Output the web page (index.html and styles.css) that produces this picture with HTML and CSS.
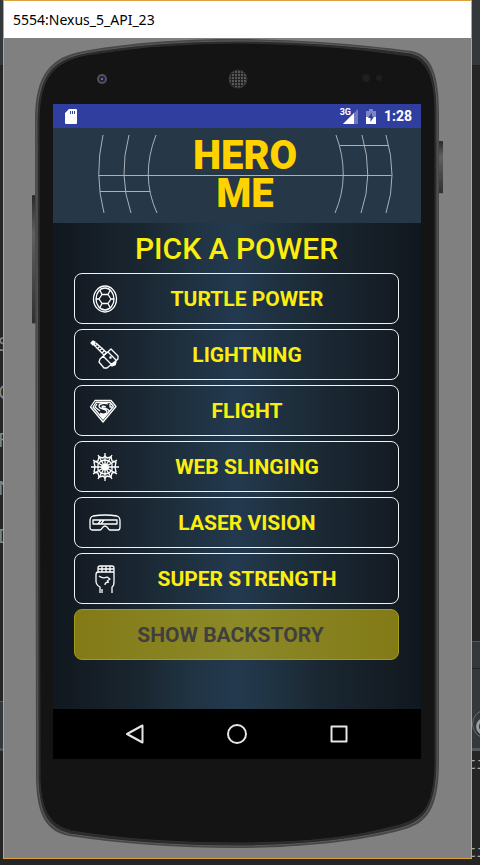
FILE: index.html
```html
<!DOCTYPE html>
<html lang="en">
<head>
<meta charset="utf-8">
<meta name="viewport" content="width=device-width, initial-scale=1">
<title>5554:Nexus_5_API_23</title>
<link rel="stylesheet" href="styles.css">
</head>
<body>
<div class="desktop">
  <aside class="edge edge-left" aria-hidden="true">
    <div class="panel panel-top"></div>
    <div class="names"><span>S</span><span>C</span><span>F</span><span>N</span><span>D</span></div>
    <div class="panel panel-low"></div>
  </aside>

  <main class="window">
    <header class="titlebar">5554:Nexus_5_API_23</header>
    <div class="stage">
      <svg class="phone" viewBox="0 0 467 819" preserveAspectRatio="none" aria-hidden="true">
        <defs>
          <linearGradient id="key" x1="0" y1="0" x2="0" y2="1"><stop offset="0" stop-color="#292929"/><stop offset=".3" stop-color="#606060"/><stop offset="1" stop-color="#303030"/></linearGradient>
          <pattern id="mesh" width="3" height="3" patternUnits="userSpaceOnUse"><rect width="3" height="3" fill="#202020"/><circle cx="1" cy="1" r="1" fill="#6b6b6b"/></pattern>
        </defs>
        <rect x="28" y="157" width="5" height="128" fill="url(#key)"/>
        <rect x="435" y="103" width="4" height="52" fill="url(#key)"/>
        <path d="M31 83C31 34 48 19 80 13C135 3 190 1 233 1C276 1 340 4 408 13C426 17 435 33 435 75V725C434 780 418 787 386 794C344 804 285 809 233 809C175 809 117 805 65 797C43 792 33 778 32 740Z" fill="#464748"/>
        <path d="M33 83C33 36 49 21 81 15C136 5 190 3 233 3C276 3 340 6 407 15C424 19 433 34 433 75V725C432 778 416 785 385 792C343 802 285 807 233 807C175 807 117 803 66 795C45 790 35 777 34 740Z" fill="#2b2b2b" stroke="#5a5b5d"/>
        <path d="M35 83C35 38 51 23 82 17C137 8 190 5 233 5C276 5 340 8 406 18C422 22 431 36 431 75V725C430 776 415 782 384 789C342 800 285 804 233 804C175 804 117 800 67 792C47 787 37 774 36 740Z" fill="#141414" stroke="#303030"/>
        <circle cx="98" cy="41" r="5" fill="#55514f"/><circle cx="98" cy="41" r="3" fill="#202044"/><circle cx="98" cy="41" r="1" fill="#8181c8"/>
        <circle cx="234" cy="41" r="9" fill="url(#mesh)" stroke="#343434"/>
        <circle cx="362" cy="40" r="4" fill="#221d1e"/><circle cx="375" cy="40" r="3" fill="#211e20"/>
      </svg>

      <section class="screen">
        <div class="status">
          <svg class="sd" width="12" height="15" viewBox="0 0 12 15" role="img" aria-label="SD card"><path fill="#fff" d="M4 0h7q1 0 1 1v13q0 1-1 1H1q-1 0-1-1V4z"/><path stroke="#303f9f" d="M5.500 2v3M7.500 2v3M9.500 2v3"/></svg>
          <div class="signals">
            <span class="net">3G</span>
            <svg class="cell" width="15" height="15" viewBox="0 0 15 15" aria-hidden="true"><path fill="#7079bc" d="M15 0v15H0z"/><path fill="#fff" d="M11 4v11H0z"/></svg>
            <svg class="battery" width="10" height="15" viewBox="0 0 10 15" role="img" aria-label="Charging"><path fill="#7d86c4" d="M3 0h4v2h3v13H0V2h3z"/><path fill="#fff" d="M0 8h10v7H0z"/><path fill="#303f9f" d="M6 3.500L2 9h2.500v4L8 7.500H6z"/></svg>
            <time>1:28</time>
          </div>
        </div>

        <div class="banner">
          <svg class="globe" viewBox="0 0 368 95" preserveAspectRatio="none" aria-hidden="true">
            <path d="M50 7Q41 47 51 85M76 7Q65 48 78 85M103 7Q87 48 104 85M283 7Q298 48 282 85M309 7Q321 48 308 85M333 7Q345 48 333 85M45.500 47.500H338.500M47 63.500H97M287 17.500H335"/>
          </svg>
          <h1>HERO<br>ME</h1>
        </div>

        <div class="content">
          <h2>PICK A POWER</h2>
          <div class="powers">
            <button type="button"><svg viewBox="0 0 32 32"><ellipse cx="16" cy="16" rx="11.500" ry="13"/><ellipse cx="16" cy="16" rx="9" ry="11"/><path d="M13 11.500h6l3 4.500-3 4.500h-6L10 16zM13 11.500l-2-4M19 11.500l2-4M22 16h3M19 20.500l2 4M13 20.500l-2 4M10 16H7"/></svg><span>TURTLE POWER</span></button>
            <button type="button"><svg viewBox="0 0 32 32"><path class="solid" d="M2 4l2-2 2 1v2L4 6z"/><path d="M5 6l10 10M7 4l10 9M6 7l3-2M9 9l2-2M11 11l3-2M13 14l3-3M15 16l3-3"/><path d="M11 20l11-10 7 7v3L18 29h-3l-5-6zM14 17l9 9M19 13l9 9"/><path class="solid" d="M22 26l5-3-1 3-3 1zM21 18h1v1h-1z"/></svg><span>LIGHTNING</span></button>
            <button type="button"><svg viewBox="0 0 32 32"><path d="M6 5.500h16l5 6L14 27 1.500 12zM7 7.500h14l3.500 4L14 24 4 12z"/><path d="M19 9c-3-1-9-1-9 2 0 4 8 2 8 6 0 2-4 3-7 1M17 12c-2-1-4-1-4 0 0 2 8 1 7 5M8 9l-2 3 5 4M21 9v3h2M11 20h6"/><path class="solid" d="M12 21h4l-2 2z"/></svg><span>FLIGHT</span></button>
            <button type="button"><svg viewBox="0 0 32 32"><path d="M16 2v28M2 16h28M9 4l14 24M23 4L9 28M4 9l24 14M4 23L28 9"/><path d="M16 5l-2 2-4-1-1 4-4 1 1 5-1 5 4 1 1 4 4-1 2 2 2-2 4 1 1-4 4-1-1-5 1-5-4-1-1-4-4 1zM16 9l-4 1-3 3v6l3 3 4 1 4-1 3-3v-6l-3-3z"/><path class="solid" d="M16 13l3 1v4l-3 1-3-1v-4z"/></svg><span>WEB SLINGING</span></button>
            <button type="button"><svg viewBox="0 0 32 32"><path d="M4 9q12-2 24 0 3 1 3 5v6q0 3-2 3h-8c-2 0-2-4-5-4s-3 4-5 4H3q-2 0-2-3v-6q0-4 3-5z"/><path d="M4 13h24v4H4zM9 17l3-4M12 17l3-4"/></svg><span>LASER VISION</span></button>
            <button type="button"><svg viewBox="0 0 32 32"><path d="M9 10V5q0-2 2-2h12q2 0 2 2v14q0 4-2 5v6M9 9q-2 0-2 3v6q0 4 4 6v6M13 30v-4M9 9h5M13 3v6M17 3v6M21 3v6M9 6h4M13 6h4M17 6h4M21 6h4M14 9h7v-2"/><path d="M10 13q4 3 8 1l3 2-3 2M20 19q-4 0-4 3M21 9h4"/></svg><span>SUPER STRENGTH</span></button>
            <button type="button" class="story" disabled>SHOW BACKSTORY</button>
          </div>
        </div>

        <nav class="navbar">
          <button type="button" aria-label="Back"><svg viewBox="0 0 22 22"><path d="M18.500 2.500v17L3 11z"/></svg></button>
          <button type="button" aria-label="Home"><svg viewBox="0 0 22 22"><circle cx="11" cy="11" r="9"/></svg></button>
          <button type="button" aria-label="Overview"><svg viewBox="0 0 22 22"><path d="M3.500 3.500h15v15h-15z"/></svg></button>
        </nav>
      </section>
    </div>
  </main>

  <aside class="edge edge-right" aria-hidden="true">
    <div class="panel panel-top"></div>
    <div class="panel panel-mid"></div>
    <div class="panel panel-tool"><i></i></div>
    <div class="log"><span>ti</span><span>ti</span></div>
  </aside>
</div>
</body>
</html>
```
FILE: styles.css
```css
* { box-sizing: border-box; }

body {
  margin: 0;
  background: #252525;
  font-family: Roboto, "Liberation Sans", sans-serif;
}

.desktop {
  display: grid;
  grid-template-columns: 3px 1fr 8px;
  min-height: 100vh;
}

/* Slivers of the editor on both sides of the emulator window */
.edge {
  display: flex;
  flex-direction: column;
  overflow: hidden;
  background: #252525;
}

.panel { background: #35383a; }
.edge .panel-top { height: 66px; border-bottom: 1px solid #222; }
.edge-left .panel-low { height: 50px; margin-top: auto; margin-bottom: 114px; border-top: 1px solid #555; border-bottom: 3px solid #4f5254; }

.names {
  display: flex;
  flex-direction: column;
  gap: 24px;
  margin: 266px 0 0 -2px;
  color: #858887;
  font: 20px/24px "Open Sans", sans-serif;
}

.edge-right .panel-mid { height: 28px; margin-top: 575px; border-top: 1px solid #555; border-bottom: 1px solid #222; }
.edge-right .panel-tool { height: 82px; border-bottom: 3px solid #55585a; padding-top: 40px; }
.panel-tool i {
  display: block;
  width: 30px;
  height: 30px;
  border: 1px solid #6b6e70;
  border-radius: 50%;
}
.panel-tool i::before {
  content: "";
  display: block;
  width: 11px;
  height: 11px;
  margin: 8px 3px;
  border: 3px solid #9b9da0;
  border-radius: 50%;
}
.log {
  display: flex;
  flex-direction: column;
  gap: 68px;
  margin: 4px 0 0 -5px;
  color: #a5aaac;
  font: 16px/20px "Liberation Mono", monospace;
}

.window {
  display: flex;
  flex-direction: column;
  min-width: 0;
  margin-bottom: 6px;
  border: 1px solid #dca03f;
}

.titlebar {
  padding: 0 9px;
  background: #fff;
  color: #000;
  font: 14px/37px "Noto Sans", sans-serif;
}

.stage {
  position: relative;
  flex: 1;
  display: flex;
  padding: 66px 50px 99px 49px;
  background: #808080;
}

.phone {
  position: absolute;
  inset: 0;
  width: 100%;
  height: 100%;
}

.screen {
  position: relative;
  flex: 1;
  display: flex;
  flex-direction: column;
  min-width: 0;
}

.status {
  display: flex;
  justify-content: space-between;
  align-items: center;
  height: 24px;
  padding: 0 9px 0 12px;
  background: #303f9f;
  color: #fff;
}
.signals { display: flex; align-items: center; }
.net { align-self: flex-start; padding-top: 3px; font-size: 9px; font-weight: 700; line-height: 10px; }
.cell { margin-left: -8px; }
.battery { margin: 0 8px; }
.status time { font-size: 14px; font-weight: 700; line-height: 24px; }

.banner {
  position: relative;
  padding: 9px 0 10px;
  background: #263747;
}
.globe {
  position: absolute;
  inset: 0;
  width: 100%;
  height: 100%;
  fill: none;
  stroke: #a9b1b9;
}
.banner h1 {
  position: relative;
  margin: 0 0 0 16px;
  color: #ffd200;
  font: 900 40px/38px Roboto, sans-serif;
  text-align: center;
}

.content {
  flex: 1;
  padding: 8px 22px 0 21px;
  background: linear-gradient(90deg, #11171e, #1a2731 25%, #1f3342 37%, #23394e 50%, #1f3342 60%, #1a2731 73%, #11171e);
}
.content h2 {
  margin: 0 0 6px;
  color: #fbee0f;
  font-size: 30px;
  font-weight: 500;
  line-height: 36px;
  text-align: center;
}

.powers { display: flex; flex-direction: column; gap: 5px; }
.powers button {
  display: flex;
  align-items: center;
  height: 51px;
  padding: 0 15px 0 14px;
  border: 1px solid #f0f1f2;
  border-radius: 8px;
  background: linear-gradient(90deg, #141a22, #1d2e3b 30%, #23394e 50%, #1d2e3b 68%, #141a22);
  color: #fbee0f;
  font: 700 21px/24px Roboto, sans-serif;
}
.powers svg {
  flex: none;
  width: 32px;
  height: 32px;
  fill: none;
  stroke: #fff;
  stroke-width: 1.3;
  stroke-linejoin: round;
}
.powers .solid { fill: #fff; }
.powers span { flex: 1; margin-left: -10px; text-align: center; }
.powers .story {
  justify-content: center;
  padding: 0 12px 0 0;
  border-color: #a39b1b;
  background: linear-gradient(90deg, #827a17, #8c8928 50%, #827a17);
  color: #3f3f3f;
}

.navbar {
  display: flex;
  justify-content: center;
  gap: 80px;
  padding: 14px 0;
  background: #000;
}
.navbar button { height: 22px; padding: 0; border: 0; background: none; }
.navbar svg {
  display: block;
  width: 22px;
  height: 22px;
  fill: none;
  stroke: #e6e6e6;
  stroke-width: 2;
  stroke-linejoin: round;
}
```
